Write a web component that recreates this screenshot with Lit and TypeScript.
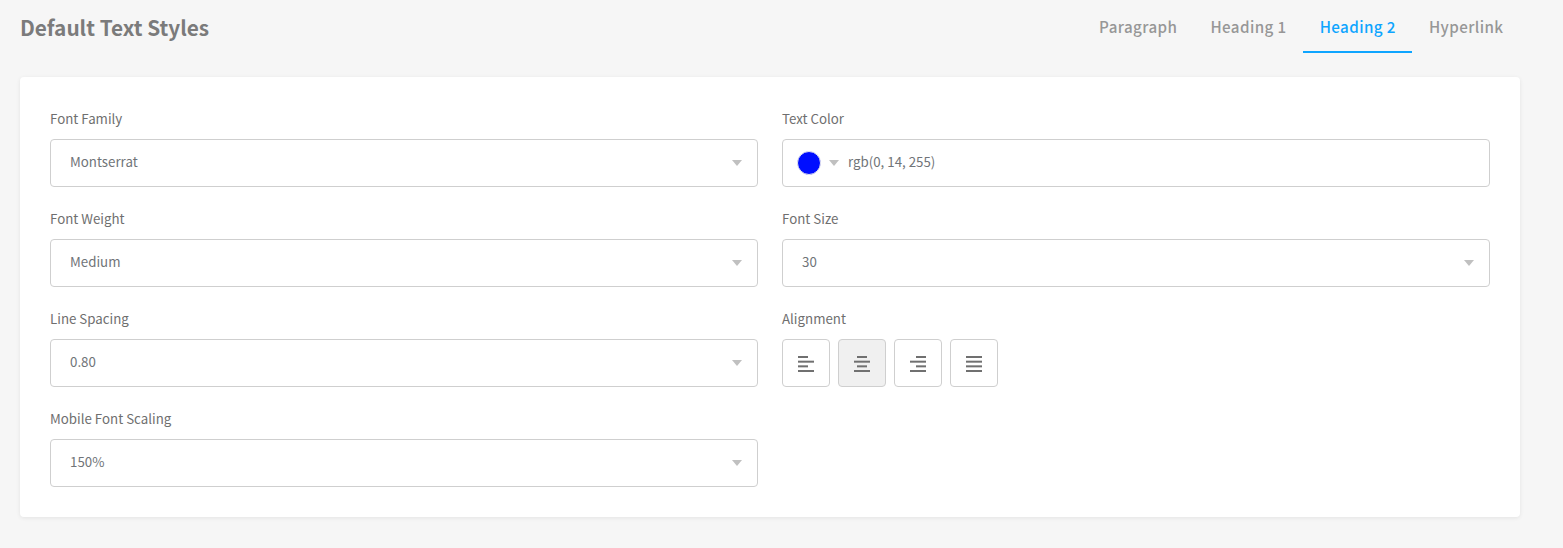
import { LitElement, html, css, svg } from "lit";
import { customElement } from "lit/decorators.js";

const ALIGN: [number, number][][] = [
  [[0, 10], [0, 16], [0, 10], [0, 16]],
  [[3, 10], [0, 16], [3, 10], [0, 16]],
  [[6, 10], [0, 16], [6, 10], [0, 16]],
  [[0, 16], [0, 16], [0, 16], [0, 16]],
];

@customElement("app-root")
export class AppRoot extends LitElement {
  static styles = css`
    :host {
      display: block;
      width: 100%;
      min-height: 548px;
      background: #f6f6f6;
      font-family: "Noto Sans CJK SC", "Noto Sans", sans-serif;
      color: #6f7275;
      box-sizing: border-box;
      padding: 0 43px 30px 20px;
    }
    .head {
      display: flex;
      justify-content: space-between;
      align-items: flex-start;
      height: 77px;
    }
    h1 {
      margin: 0;
      padding-top: 11px;
      font-size: 20.8px;
      line-height: 32px;
      font-weight: 600;
      color: #7b7b7b;
    }
    .tabs {
      display: flex;
    }
    .tab {
      height: 53px;
      box-sizing: border-box;
      padding: 14px 16.5px 0;
      font-size: 15.2px;
      line-height: 24px;
      font-weight: 500;
      letter-spacing: 0.4px;
      color: #979797;
    }
    .tab.on {
      color: #0ea5ff;
      border-bottom: 2px solid #0ea5ff;
    }
    .card {
      background: #fff;
      border-radius: 4px;
      box-shadow: 0 1px 4px rgba(0, 0, 0, 0.08);
      padding: 30px;
      display: grid;
      grid-template-columns: 708px 708px;
      column-gap: 24px;
      row-gap: 20px;
    }
    .field {
      display: flex;
      flex-direction: column;
      height: 80px;
    }
    label {
      display: block;
      height: 32px;
      font-size: 13.3px;
      line-height: 23px;
      color: #6f6f6f;
    }
    .box {
      height: 48px;
      box-sizing: border-box;
      border: 1px solid #cfcfcf;
      border-radius: 4px;
      display: flex;
      align-items: center;
      padding: 0 15px 0 19px;
      font-size: 13.3px;
      line-height: 20px;
      color: #707478;
      justify-content: space-between;
    }
    .box > span:not(.caret):not(.dot) {
      position: relative;
      top: -1px;
    }
    .caret {
      width: 0;
      height: 0;
      border-left: 5.5px solid transparent;
      border-right: 5.5px solid transparent;
      border-top: 6px solid #c0c0c0;
    }
    .box.color {
      justify-content: flex-start;
      padding-left: 14px;
    }
    .dot {
      width: 24px;
      height: 24px;
      border-radius: 50%;
      background: #000eff;
      box-sizing: border-box;
      border: 1px solid #e4e4ee;
      margin-right: 8px;
    }
    .box.color .caret {
      margin-right: 9px;
    }
    .aligns {
      display: flex;
      gap: 8px;
    }
    .btn {
      width: 48px;
      height: 48px;
      box-sizing: border-box;
      border: 1px solid #cfcfcf;
      border-radius: 4px;
      display: flex;
      align-items: center;
      justify-content: center;
      background: #fff;
    }
    .btn.on {
      background: #f0f0f0;
    }
    .btn svg {
      display: block;
      width: 16px;
      height: 18px;
    }
  `;

  private field(label: string, value: string) {
    return html`<div class="field">
      <label>${label}</label>
      <div class="box"><span>${value}</span><span class="caret"></span></div>
    </div>`;
  }

  private alignIcon(lines: [number, number][]) {
    return html`<svg viewBox="0 0 16 18">
      ${lines.map(
        ([x, w], i) =>
          svg`<rect x=${x} y=${2 + i * 4.67} width=${w} height="2" fill="#707070"></rect>`
      )}
    </svg>`;
  }

  render() {
    return html`
      <div class="head">
        <h1>Default Text Styles</h1>
        <div class="tabs">
          <div class="tab">Paragraph</div>
          <div class="tab">Heading 1</div>
          <div class="tab on">Heading 2</div>
          <div class="tab">Hyperlink</div>
        </div>
      </div>
      <div class="card">
        ${this.field("Font Family", "Montserrat")}
        <div class="field">
          <label>Text Color</label>
          <div class="box color">
            <span class="dot"></span><span class="caret"></span><span>rgb(0, 14, 255)</span>
          </div>
        </div>
        ${this.field("Font Weight", "Medium")}
        ${this.field("Font Size", "30")}
        ${this.field("Line Spacing", "0.80")}
        <div class="field">
          <label>Alignment</label>
          <div class="aligns">
            ${ALIGN.map(
              (l, i) => html`<div class="btn ${i === 1 ? "on" : ""}">${this.alignIcon(l)}</div>`
            )}
          </div>
        </div>
        ${this.field("Mobile Font Scaling", "150%")}
      </div>
    `;
  }
}
